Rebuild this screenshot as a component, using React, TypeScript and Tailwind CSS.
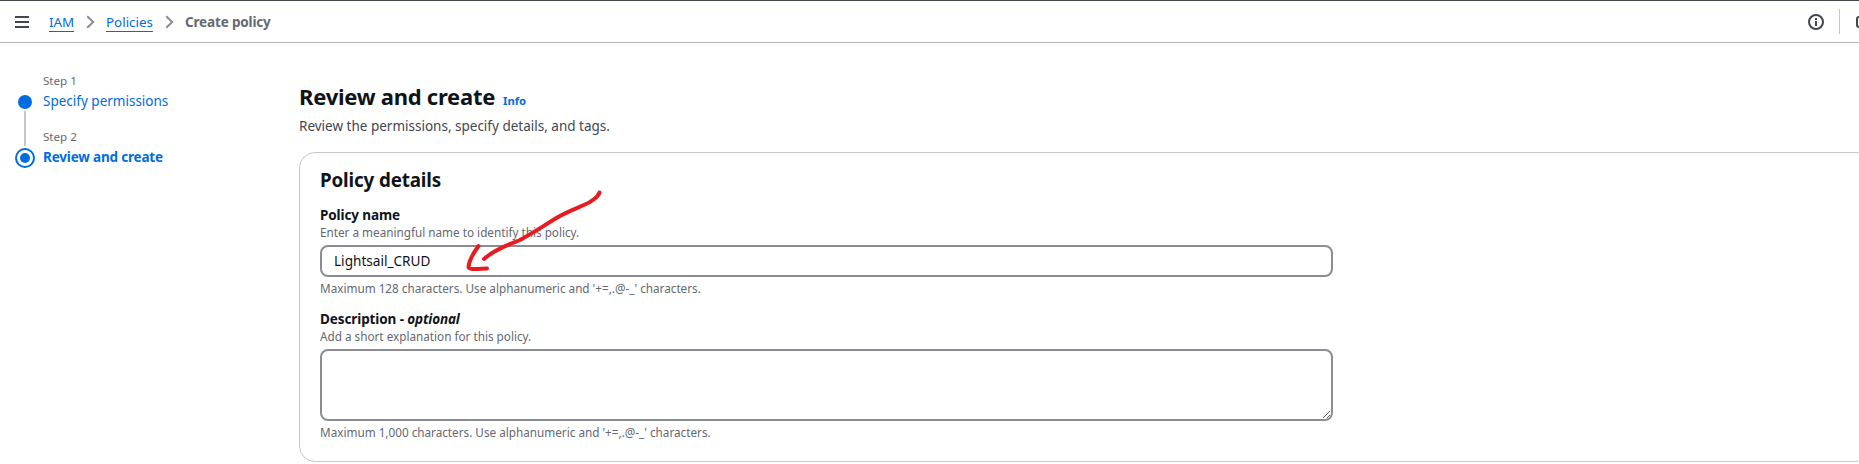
const Chevron = () => (
  <span className="ml-3 flex w-5 items-start">
    <svg width="10" height="14" viewBox="0 0 10 14" fill="none" className="mt-[3px] shrink-0">
      <path d="M1.200 1.200 7.200 7 1.200 12.800" stroke="#8c8c94" strokeWidth="2" />
    </svg>
  </span>
);

function Header() {
  return (
    <header className="flex h-[43px] justify-between border-t border-b border-t-[#424650] border-b-[#b4b4bb] bg-white">
      <div className="flex items-start pt-[11px] pl-[15px]">
        <svg width="14" height="12" viewBox="0 0 14 12" className="mt-1 shrink-0">
          <path d="M0 1h14M0 6h14M0 11h14" stroke="#424650" strokeWidth="2" />
        </svg>
        <nav className="flex text-[13.4px] leading-5">
          <a className="ml-5 h-5 w-[25px] border-b border-[#006ce0] text-[#006ce0]">IAM</a>
          <Chevron />
          <a className="h-5 w-[47px] border-b border-[#006ce0] text-[#006ce0]">Policies</a>
          <Chevron />
          <span className="text-[13.5px] font-bold tracking-[-0.16px] text-[#656871]">Create policy</span>
        </nav>
      </div>
      <div className="flex items-start pt-2">
        <svg width="16" height="16" viewBox="0 0 16 16" fill="none" className="mt-[5px] mr-[15px]">
          <circle cx="8" cy="8" r="7" stroke="#424650" strokeWidth="2" />
          <path d="M8 4v2M8 7v5" stroke="#424650" strokeWidth="2" />
        </svg>
        <span className="h-[25px] w-px bg-[#c6c6cd]" />
        <svg width="3" height="12" viewBox="0 0 3 12" fill="none" className="mt-[7px] ml-4">
          <rect x="1" y="1" width="12" height="10" rx="2" stroke="#424650" strokeWidth="2" />
        </svg>
      </div>
    </header>
  );
}

function Steps() {
  return (
    <aside className="flex w-[299px] shrink-0 pt-[30px] pl-[15px]">
      <svg width="20" height="74" viewBox="0 0 20 74" fill="none" className="mt-[22px] shrink-0">
        <circle cx="10" cy="7" r="7" fill="#006ce0" />
        <path d="M10 16v35" stroke="#c6c6cd" strokeWidth="2" />
        <circle cx="10" cy="63" r="9" stroke="#006ce0" strokeWidth="2" />
        <circle cx="10" cy="63" r="5" fill="#006ce0" />
      </svg>
      <ol className="ml-[8px]">
        <li className="mb-[18px]">
          <div className="text-[11.6px] leading-4 text-[#656871]">Step 1</div>
          <div className="mt-[2px] text-[13.5px] leading-5 text-[#006ce0]">Specify permissions</div>
        </li>
        <li>
          <div className="text-[11.6px] leading-4 text-[#656871]">Step 2</div>
          <div className="mt-[2px] text-[13.5px] leading-5 font-bold tracking-[-0.18px] text-[#006ce0]">
            Review and create
          </div>
        </li>
      </ol>
    </aside>
  );
}

const labelStyle = "text-[13.5px] leading-5 font-bold tracking-[-0.1px] text-[#0f141a]";
const hintStyle = "text-[11.73px] leading-[14px] pb-[2px] text-[#656871]";

function PolicyDetails() {
  return (
    <section className="relative mt-4 h-[310px] w-[1574px] rounded-2xl border border-[#c6c6cd] pt-[15px] pl-5">
      <h2 className="text-[18.8px] leading-6 font-bold tracking-[-0.14px] text-[#0f141a]">Policy details</h2>
      <div className="mt-[13px]">
        <div className={labelStyle}>Policy name</div>
        <div className={hintStyle}>Enter a meaningful name to identify this policy.</div>
        <input
          defaultValue="Lightsail_CRUD"
          className="mt-1 block h-8 w-[1013px] rounded-lg border-2 border-[#8c8c94] px-3 pb-[1px] text-[13.6px] leading-5 text-[#0f141a] outline-none"
        />
        <div className={`mt-1 ${hintStyle}`}>Maximum 128 characters. Use alphanumeric and '+=,.@-_' characters.</div>
      </div>
      <div className="mt-3">
        <div className={labelStyle}>
          Description - <i className="tracking-[-0.15px]">optional</i>
        </div>
        <div className={hintStyle}>Add a short explanation for this policy.</div>
        <textarea className="mt-1 block h-[72px] w-[1013px] rounded-lg border-2 border-[#8c8c94] outline-none" />
        <div className={`mt-1 ${hintStyle}`}>Maximum 1,000 characters. Use alphanumeric and '+=,.@-_' characters.</div>
      </div>
      <svg
        width="142"
        height="84"
        viewBox="0 0 142 84"
        fill="none"
        className="pointer-events-none absolute top-[35px] left-[161px]"
      >
        <g stroke="#e81c1f" strokeWidth="4" strokeLinecap="round" strokeLinejoin="round">
          <path d="M138.500 4.500C137 9 130 14 124 16.500C115 20.500 108 23 98 28.500C86 35.500 74 44 59 52C49 56 34 61 23 71" />
          <path d="M17.500 58C11 67 8 73 7.500 79C8 82 15 81 26 80.500" />
        </g>
      </svg>
    </section>
  );
}

export default function App() {
  return (
    <div className="h-[464px] w-full overflow-hidden bg-white font-['Noto_Sans',sans-serif] whitespace-nowrap">
      <Header />
      <div className="flex">
        <Steps />
        <main className="shrink-0 pt-[39px]">
          <div className="flex items-baseline">
            <h1 className="text-[22px] leading-7 font-bold tracking-[-0.25px] text-[#0f141a]">Review and create</h1>
            <a className="ml-2 text-[11.3px] font-bold tracking-[-0.1px] text-[#006ce0]">Info</a>
          </div>
          <p className="mt-[6px] text-[13.5px] leading-5 text-[#424650]">
            Review the permissions, specify details, and tags.
          </p>
          <PolicyDetails />
        </main>
      </div>
    </div>
  );
}
